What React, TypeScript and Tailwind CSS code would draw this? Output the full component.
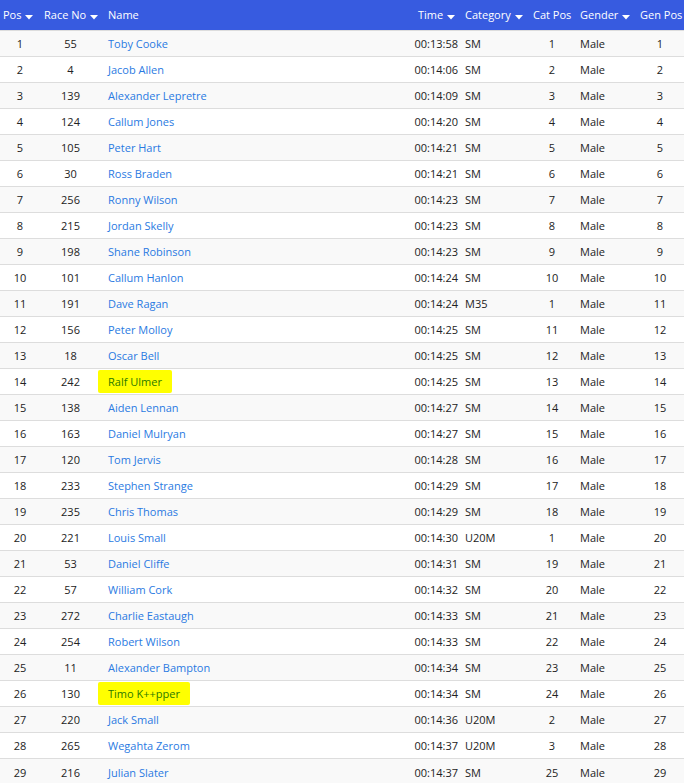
const rows: [number, number, string, string, string, number, number][] = [
  [1, 55, "Toby Cooke", "00:13:58", "SM", 1, 1],
  [2, 4, "Jacob Allen", "00:14:06", "SM", 2, 2],
  [3, 139, "Alexander Lepretre", "00:14:09", "SM", 3, 3],
  [4, 124, "Callum Jones", "00:14:20", "SM", 4, 4],
  [5, 105, "Peter Hart", "00:14:21", "SM", 5, 5],
  [6, 30, "Ross Braden", "00:14:21", "SM", 6, 6],
  [7, 256, "Ronny Wilson", "00:14:23", "SM", 7, 7],
  [8, 215, "Jordan Skelly", "00:14:23", "SM", 8, 8],
  [9, 198, "Shane Robinson", "00:14:23", "SM", 9, 9],
  [10, 101, "Callum Hanlon", "00:14:24", "SM", 10, 10],
  [11, 191, "Dave Ragan", "00:14:24", "M35", 1, 11],
  [12, 156, "Peter Molloy", "00:14:25", "SM", 11, 12],
  [13, 18, "Oscar Bell", "00:14:25", "SM", 12, 13],
  [14, 242, "Ralf Ulmer", "00:14:25", "SM", 13, 14],
  [15, 138, "Aiden Lennan", "00:14:27", "SM", 14, 15],
  [16, 163, "Daniel Mulryan", "00:14:27", "SM", 15, 16],
  [17, 120, "Tom Jervis", "00:14:28", "SM", 16, 17],
  [18, 233, "Stephen Strange", "00:14:29", "SM", 17, 18],
  [19, 235, "Chris Thomas", "00:14:29", "SM", 18, 19],
  [20, 221, "Louis Small", "00:14:30", "U20M", 1, 20],
  [21, 53, "Daniel Cliffe", "00:14:31", "SM", 19, 21],
  [22, 57, "William Cork", "00:14:32", "SM", 20, 22],
  [23, 272, "Charlie Eastaugh", "00:14:33", "SM", 21, 23],
  [24, 254, "Robert Wilson", "00:14:33", "SM", 22, 24],
  [25, 11, "Alexander Bampton", "00:14:34", "SM", 23, 25],
  [26, 130, "Timo K++pper", "00:14:34", "SM", 24, 26],
  [27, 220, "Jack Small", "00:14:36", "U20M", 2, 27],
  [28, 265, "Wegahta Zerom", "00:14:37", "U20M", 3, 28],
  [29, 216, "Julian Slater", "00:14:37", "SM", 25, 29],
];

const highlighted = [14, 26];

function Caret() {
  return (
    <svg width="8" height="5" viewBox="0 0 8 5" className="inline-block ml-[4px] mt-[3px]">
      <path d="M0 0h8L4 4.5z" fill="white" />
    </svg>
  );
}

export default function App() {
  return (
    <div className="w-[684px] h-[783px] overflow-hidden bg-white font-['Open_Sans',sans-serif] text-[11px] text-[#222]">
      <table className="w-[684px] table-fixed border-collapse">
        <colgroup>
          <col className="w-[40px]" />
          <col className="w-[61px]" />
          <col className="w-[312px]" />
          <col className="w-[48px]" />
          <col className="w-[66px]" />
          <col className="w-[50px]" />
          <col className="w-[59px]" />
          <col className="w-[48px]" />
        </colgroup>
        <thead>
          <tr className="h-[30px] bg-[#375be0] text-white text-left">
            <th className="font-normal pl-[3px] whitespace-nowrap">Pos<Caret /></th>
            <th className="font-normal pl-[4px] whitespace-nowrap">Race No<Caret /></th>
            <th className="font-normal pl-[7px]">Name</th>
            <th className="font-normal pl-[5px] whitespace-nowrap">Time<Caret /></th>
            <th className="font-normal pl-[4px] whitespace-nowrap">Category<Caret /></th>
            <th className="font-normal pl-[6px] whitespace-nowrap">Cat Pos</th>
            <th className="font-normal pl-[3px] whitespace-nowrap">Gender<Caret /></th>
            <th className="font-normal pl-[4px] whitespace-nowrap">Gen Pos</th>
          </tr>
        </thead>
        <tbody>
          {rows.map(([pos, race, name, time, cat, catPos, genPos]) => (
            <tr key={pos} className="h-[26px] border-t border-[#dddddd] odd:bg-[#f9f9f9] [&>td]:pt-[3px]">
              <td className="text-center">{pos}</td>
              <td className="text-center">{race}</td>
              <td className="pl-[7px]">
                {highlighted.includes(pos) ? (
                  <span className="bg-[#ffff00] text-[#2b7a00] -ml-[10px] px-[10px] py-[4px] rounded-[2px]">{name}</span>
                ) : (
                  <a className="text-[#2a7ae2]">{name}</a>
                )}
              </td>
              <td className="text-right pr-[3px]">{time}</td>
              <td className="pl-[4px]">{cat}</td>
              <td className="text-center">{catPos}</td>
              <td className="pl-[3px]">Male</td>
              <td className="text-center">{genPos}</td>
            </tr>
          ))}
        </tbody>
      </table>
    </div>
  );
}
